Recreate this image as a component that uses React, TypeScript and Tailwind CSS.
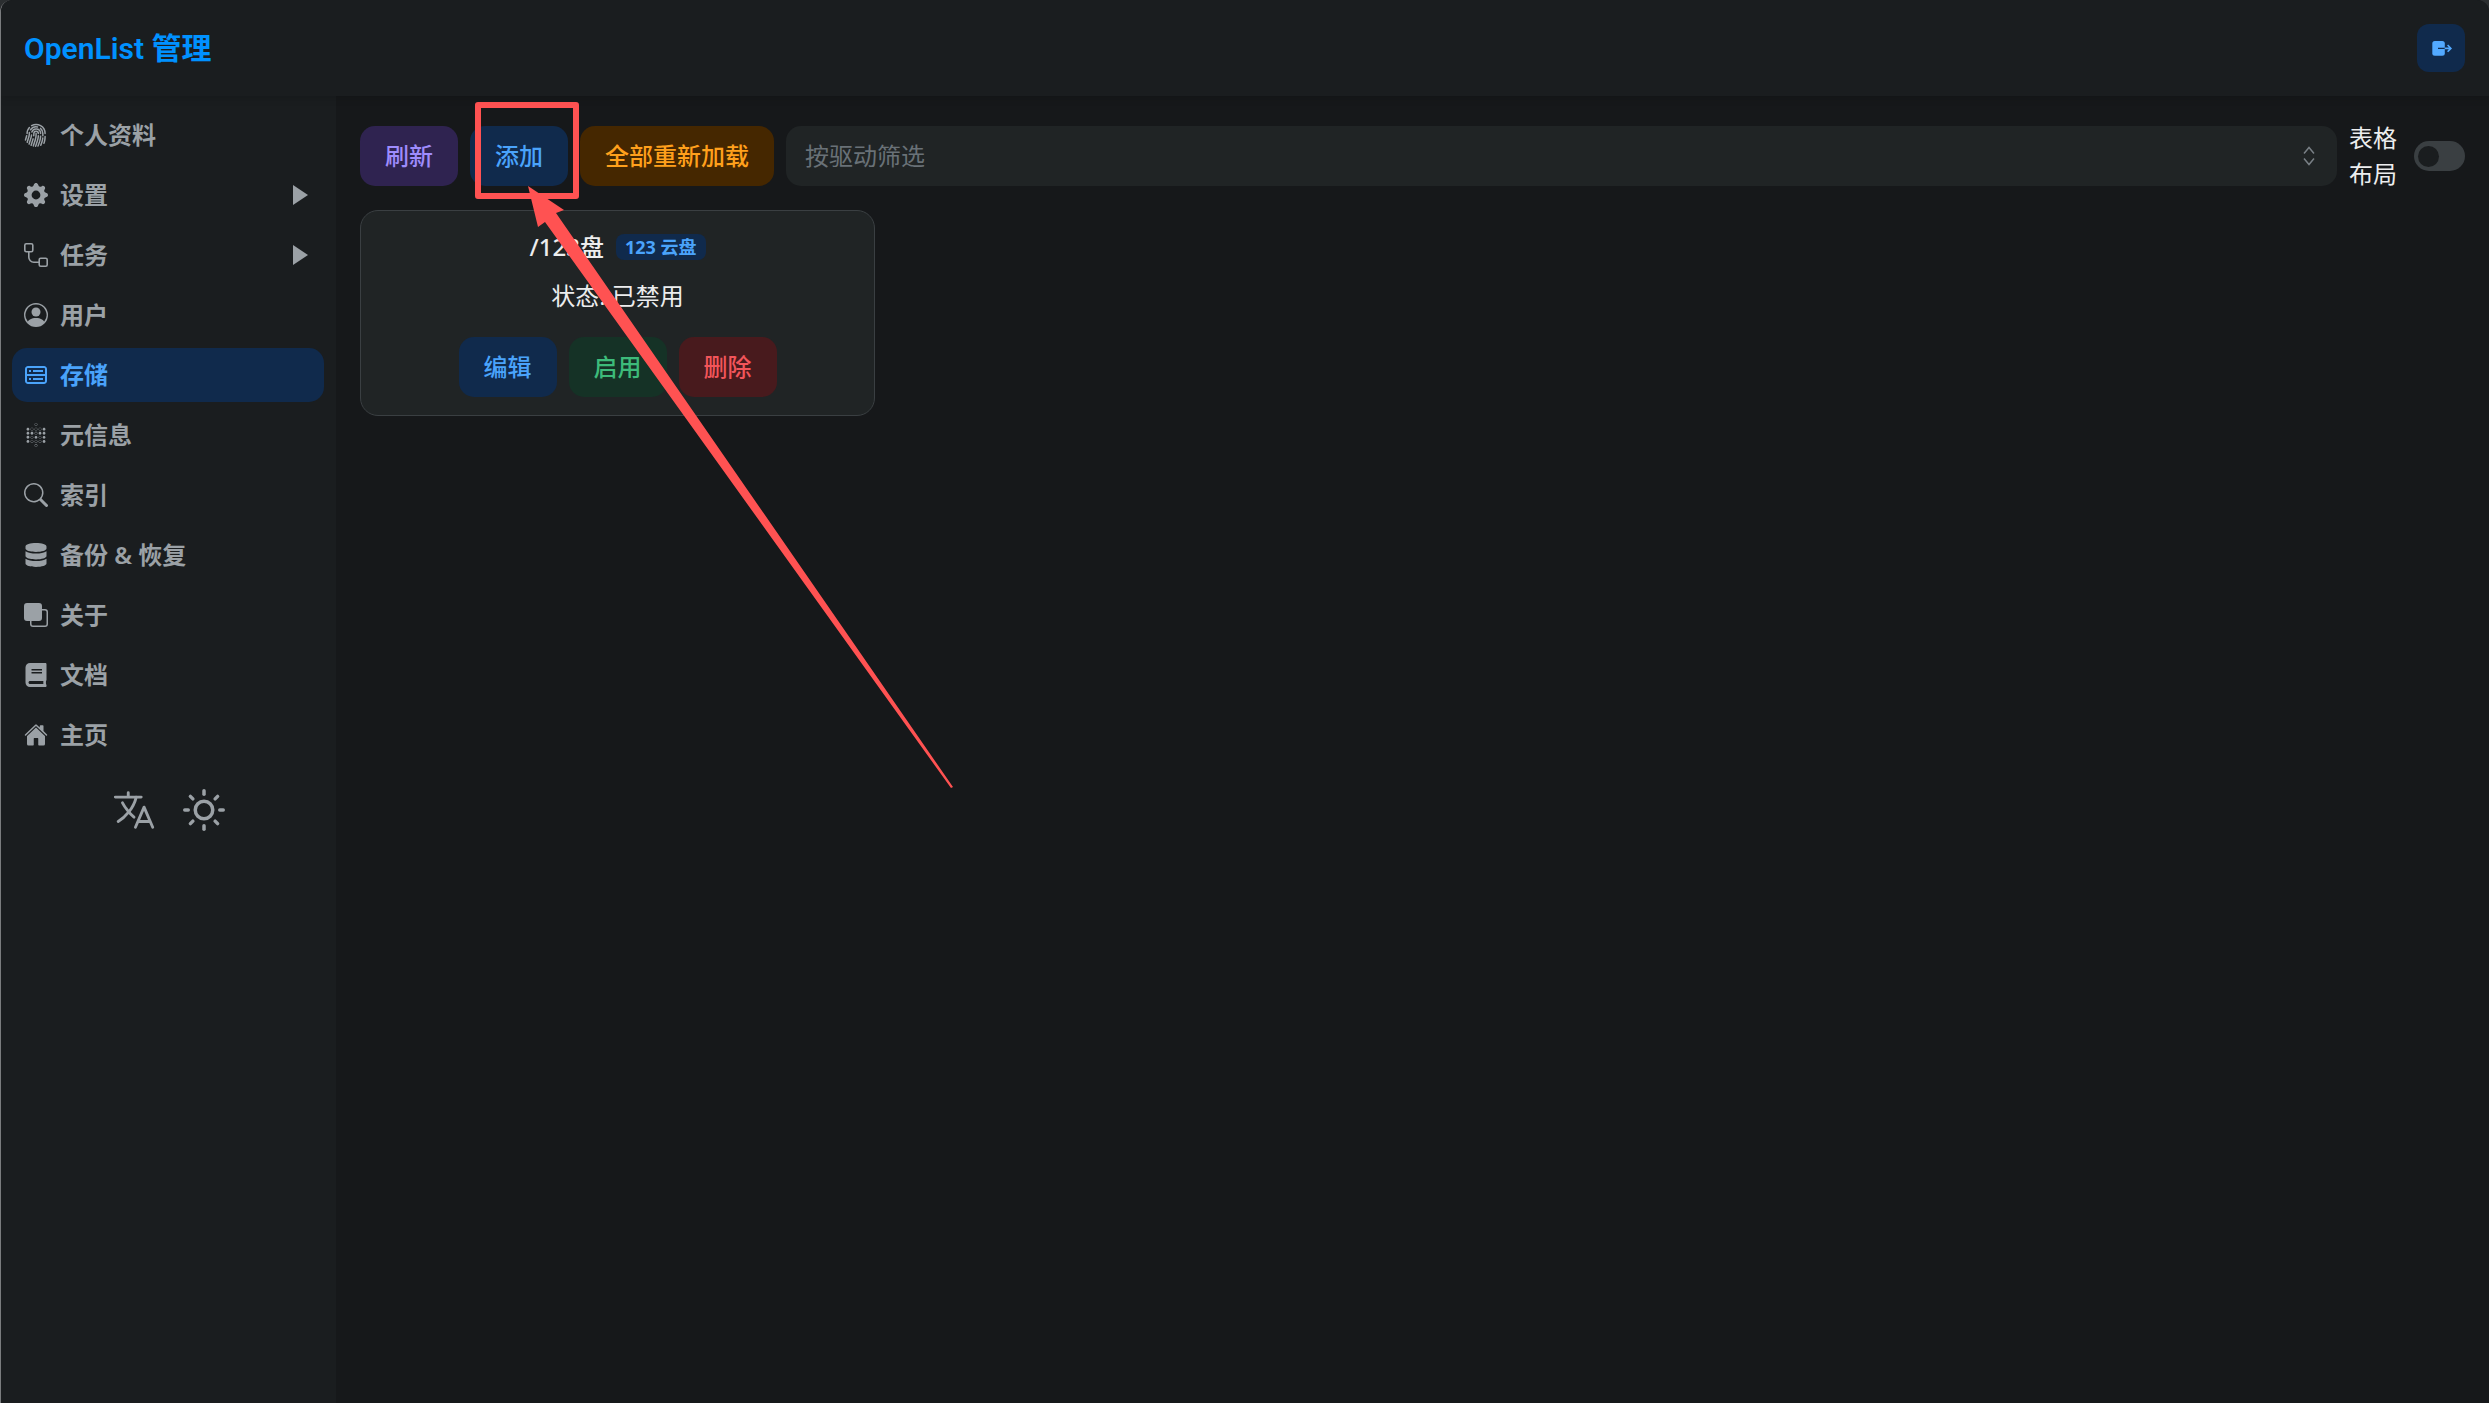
import { BsFingerprint, BsGearFill, BsPersonCircle, BsSearch, BsFront } from 'react-icons/bs';
import { CgDatabase } from 'react-icons/cg';
import { SiMetabase } from 'react-icons/si';
import { FaDatabase, FaBook } from 'react-icons/fa';
import { IoLanguageOutline, IoHome } from 'react-icons/io5';
import { FiSun } from 'react-icons/fi';
import type { ComponentType } from 'react';

function TaskIcon({ className }: { className?: string }) {
  return (
    <svg viewBox="0 0 24 24" fill="none" stroke="currentColor" strokeWidth="1.6" className={className}>
      <rect x="0.8" y="0.8" width="8" height="8" rx="1.5" />
      <rect x="15.2" y="15.2" width="8" height="8" rx="1.5" />
      <path d="M4.8 8.8v5.4a5 5 0 0 0 5 5h5.4" />
    </svg>
  );
}

function LogoutIcon() {
  return (
    <svg viewBox="0 0 24 24" fill="none" className="w-[24px] h-[24px]">
      <rect x="3.3" y="5" width="12.5" height="14.8" rx="2.5" fill="#52a9ff" />
      <path d="M9 12.4h6.8" stroke="#102a4c" strokeWidth="1.4" />
      <path d="M15.8 12.4h6M18.6 9l3.3 3.4-3.3 3.4" stroke="#52a9ff" strokeWidth="1.6" />
    </svg>
  );
}

function SelectorIcon() {
  return (
    <svg viewBox="0 0 24 24" fill="none" stroke="#787f85" strokeWidth="1.5" className="w-[24px] h-[24px]">
      <path d="M7 9.5 12 3.5l5 6M7 14.5l5 6 5-6" />
    </svg>
  );
}

function Caret() {
  return (
    <svg viewBox="0 0 15 20" className="w-[15px] h-[20px] mr-[4px] fill-[#9ba1a6]">
      <polygon points="0,0 15,10 0,20" />
    </svg>
  );
}

type Item = { icon: ComponentType<{ className?: string }>; label: string; caret?: boolean; active?: boolean };

const items: Item[] = [
  { icon: BsFingerprint, label: '个人资料' },
  { icon: BsGearFill, label: '设置', caret: true },
  { icon: TaskIcon, label: '任务', caret: true },
  { icon: BsPersonCircle, label: '用户' },
  { icon: CgDatabase, label: '存储', active: true },
  { icon: SiMetabase, label: '元信息' },
  { icon: BsSearch, label: '索引' },
  { icon: FaDatabase, label: '备份 & 恢复' },
  { icon: BsFront, label: '关于' },
  { icon: FaBook, label: '文档' },
  { icon: IoHome, label: '主页' },
];

export default function App() {
  return (
    <div className="relative h-screen overflow-hidden bg-[#2b2e30] font-['Noto_Sans','Noto_Sans_CJK_SC',sans-serif]">
      <div className="h-full flex flex-col border-l border-[#7a7c7e] rounded-t-[12px] overflow-hidden bg-[#16181a]">
        {/* Header */}
        <header className="relative z-10 h-[96px] shrink-0 flex items-center justify-between pl-[23px] pr-[24px] bg-[#1a1d1f] shadow-[0_2px_8px_rgba(0,0,0,0.15)]">
          <h1 className="text-[30px] font-semibold text-[#0091ff] font-['Roboto','Noto_Sans_CJK_SC',sans-serif]">OpenList 管理</h1>
          <button className="w-[48px] h-[48px] rounded-[12px] bg-[#102a4c] flex items-center justify-center">
            <LogoutIcon />
          </button>
        </header>

        <div className="flex-1 flex min-h-0">
          {/* Sidebar */}
          <aside className="w-[335px] shrink-0 bg-[#1a1d1f] pl-[11px] pr-[12px] pt-[12px]">
            <nav className="flex flex-col gap-[6px]">
              {items.map((item) => {
                const Icon = item.icon;
                return (
                  <div
                    key={item.label}
                    className={
                      item.active
                        ? 'h-[54px] px-[12px] flex items-center gap-[12px] rounded-[15px] bg-[#102a4c] text-[#4aa3fb]'
                        : 'h-[54px] px-[12px] flex items-center gap-[12px] rounded-[15px] text-[#9ba1a6]'
                    }
                  >
                    <Icon className="w-[24px] h-[24px] shrink-0" />
                    <span className="flex-1 text-[24px] leading-[36px] font-semibold">{item.label}</span>
                    {item.caret && <Caret />}
                  </div>
                );
              })}
            </nav>
            <div className="mt-[25px] flex justify-center items-center gap-[26px] text-[#9ba1a6]">
              <IoLanguageOutline className="w-[46px] h-[46px]" />
              <FiSun className="w-[42px] h-[42px]" />
            </div>
          </aside>

          {/* Main */}
          <main className="flex-1 min-w-0 px-[24px] pt-[24px]">
            <div className="flex items-center gap-[12px]">
              <button className="h-[60px] px-[25px] rounded-[15px] bg-[#2f2350] text-[#9e8cfc] text-[24px] font-medium">刷新</button>
              <button className="h-[60px] px-[25px] rounded-[15px] bg-[#102a4c] text-[#4aa3fb] text-[24px] font-medium">添加</button>
              <button className="h-[60px] px-[25px] rounded-[15px] bg-[#452700] text-[#ffa01c] text-[24px] font-medium whitespace-nowrap">全部重新加载</button>
              <div className="flex-1 h-[60px] pl-[19px] pr-[16px] rounded-[15px] bg-[#202425] flex items-center justify-between">
                <span className="text-[24px] text-[#697177]">按驱动筛选</span>
                <SelectorIcon />
              </div>
              <div className="w-[48px] text-[24px] leading-[36px] text-[#ecedee]">表格布局</div>
              <div className="ml-[5px] w-[51px] h-[30px] rounded-full bg-[#3a3f42] p-[4px] flex items-center">
                <div className="w-[21px] h-[21px] rounded-full bg-[#1a1d1f]" />
              </div>
            </div>

            {/* Storage card */}
            <div className="mt-[18px] w-[515px] h-[206px] rounded-[18px] border-[1.5px] border-[#3a3f42] bg-[#202425] pt-[18px] flex flex-col items-center">
              <div className="flex items-center gap-[12px] h-[36px]">
                <span className="text-[24px] font-medium text-[#ecedee]">/123盘</span>
                <span className="h-[26px] px-[9px] rounded-[8px] bg-[#102a4c] text-[#4aa3fb] text-[18px] font-bold leading-[26px]">123 云盘</span>
              </div>
              <div className="mt-[13px] text-[24px] leading-[36px] text-[#ecedee]">状态: 已禁用</div>
              <div className="mt-[23px] flex gap-[12px]">
                <button className="h-[60px] px-[25px] rounded-[15px] bg-[#102a4c] text-[#4aa3fb] text-[24px] font-medium">编辑</button>
                <button className="h-[60px] px-[25px] rounded-[15px] bg-[#153226] text-[#3dbb7a] text-[24px] font-medium">启用</button>
                <button className="h-[60px] px-[25px] rounded-[15px] bg-[#481a1d] text-[#f2555a] text-[24px] font-medium">删除</button>
              </div>
            </div>
          </main>
        </div>
      </div>

      {/* Annotation drawn over the screenshot */}
      <div className="absolute left-[475px] top-[102px] w-[104px] h-[97px] border-[6px] border-[#ff5252] rounded-[3px]" />
      <svg className="absolute inset-0 w-full h-full pointer-events-none" viewBox="0 0 2489 1403">
        <polygon points="528,186 564,210 556,213 953,787 951,788 545,222 538,227" fill="#ff5252" />
      </svg>
    </div>
  );
}
